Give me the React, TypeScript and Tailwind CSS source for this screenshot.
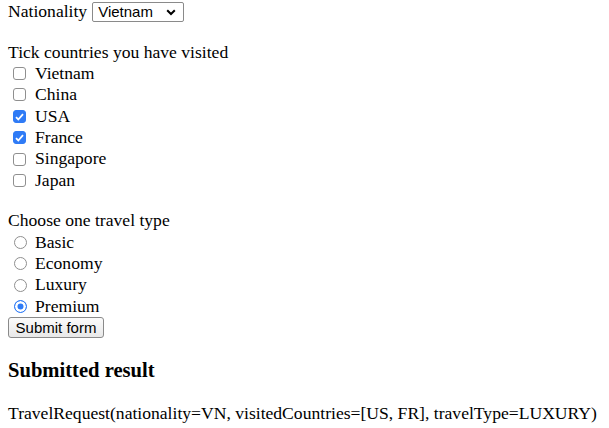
import React, { useState } from 'react';

const COUNTRIES = [
  { code: 'VN', name: 'Vietnam' },
  { code: 'CN', name: 'China' },
  { code: 'US', name: 'USA' },
  { code: 'FR', name: 'France' },
  { code: 'SG', name: 'Singapore' },
  { code: 'JP', name: 'Japan' },
];

const TYPES = ['Basic', 'Economy', 'Luxury', 'Premium'];

const App: React.FC = () => {
  const [nationality, setNationality] = useState('VN');
  const [visited, setVisited] = useState<string[]>(['US', 'FR']);
  const [travelType, setTravelType] = useState('Premium');

  const toggle = (code: string) => {
    setVisited(prev => (prev.includes(code) ? prev.filter(c => c !== code) : [...prev, code]));
  };

  return (
    <div className="min-h-screen bg-white px-2 text-black text-[17.6px] font-['Liberation_Serif','Times_New_Roman',serif]">
      <form onSubmit={e => e.preventDefault()}>
        <div className="flex items-center h-[23px] gap-[5px]">
          <span className="leading-[23px]">Nationality</span>
          <div className="relative flex">
            <select
              value={nationality}
              onChange={e => setNationality(e.target.value)}
              className="appearance-none w-[92px] h-[20px] border border-[#8a8a8a] rounded-[2px] bg-white pl-[5px] text-[15px] leading-[18px] font-['Liberation_Sans',Arial,sans-serif] outline-none"
            >
              {COUNTRIES.map(c => (
                <option key={c.code} value={c.code}>{c.name}</option>
              ))}
            </select>
            <svg className="absolute right-[8px] top-[7px] pointer-events-none" width="10" height="7" viewBox="0 0 10 7">
              <path d="M1.2 1.2l3.8 3.8 3.8-3.8" fill="none" stroke="#000" strokeWidth="2" />
            </svg>
          </div>
        </div>

        <div className="h-[18.5px]" />
        <div className="h-[21.4px] leading-[21.4px]">Tick countries you have visited</div>
        {COUNTRIES.map(c => (
          <label key={c.code} className="flex items-center h-[21.4px] pl-[5px]">
            <span className="relative flex w-[13px] h-[13px]">
              <input
                type="checkbox"
                checked={visited.includes(c.code)}
                onChange={() => toggle(c.code)}
                className="peer appearance-none m-0 w-[13px] h-[13px] rounded-[3px] border border-[#8f8f8f] bg-white checked:bg-[#2f7bf6] checked:border-[#2f7bf6]"
              />
              <svg className="absolute left-[2px] top-[3px] hidden peer-checked:block pointer-events-none" width="9" height="8" viewBox="0 0 9 8">
                <path d="M1 4.2l2.3 2.3L8 1.2" fill="none" stroke="#fff" strokeWidth="1.8" />
              </svg>
            </span>
            <span className="ml-[9px] leading-[21.4px]">{c.name}</span>
          </label>
        ))}

        <div className="h-[19px]" />
        <div className="h-[21.4px] leading-[21.4px]">Choose one travel type</div>
        {TYPES.map(t => (
          <label key={t} className="flex items-center h-[21.4px] pl-[6px]">
            <input
              type="radio"
              name="travelType"
              checked={travelType === t}
              onChange={() => setTravelType(t)}
              className="appearance-none m-0 w-[13px] h-[13px] rounded-full border border-[#8f8f8f] bg-white checked:bg-[#2f7bf6] checked:border-[#2f7bf6] checked:shadow-[inset_0_0_0_2.5px_#fff]"
            />
            <span className="ml-[8px] leading-[21.4px]">{t}</span>
          </label>
        ))}

        <button
          type="submit"
          className="flex items-center justify-center w-[96px] h-[21px] border border-[#8a8a8a] rounded-[3px] bg-gradient-to-b from-[#fbfbfb] to-[#e8e8e8] text-[15px] leading-[18px] font-['Liberation_Sans',Arial,sans-serif]"
        >
          Submit form
        </button>
      </form>

      <h3 className="mt-[19.5px] h-[24px] text-[20.6px] leading-[24px] font-bold">Submitted result</h3>
      <p className="mt-[21px] h-[21px] leading-[21px]">
        TravelRequest(nationality=VN, visitedCountries=[US, FR], travelType=LUXURY)
      </p>
    </div>
  );
};

export default App;
